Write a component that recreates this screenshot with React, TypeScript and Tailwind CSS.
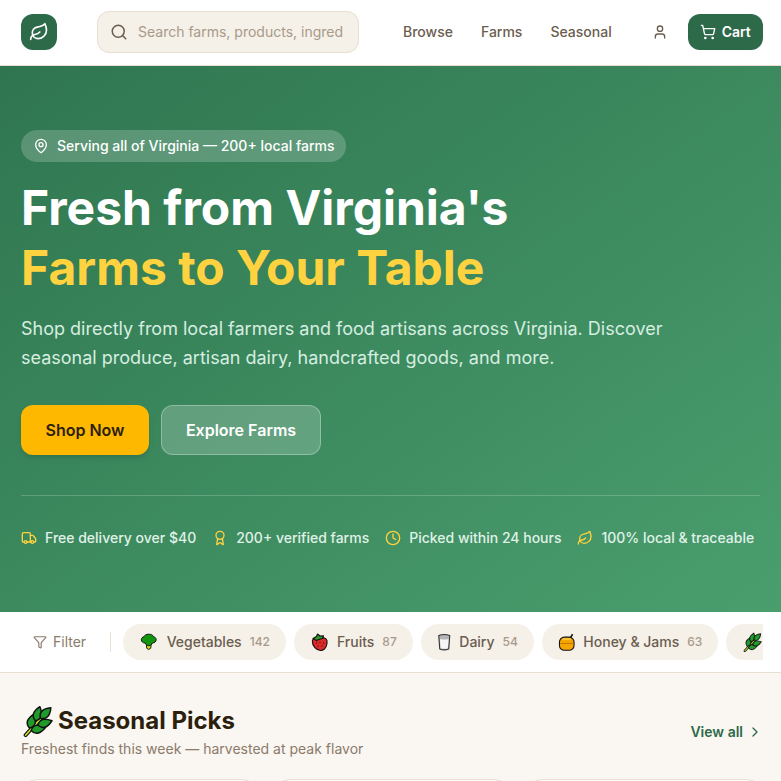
import { Award, ChevronRight, Clock, Filter, Leaf, MapPin, Search, ShoppingCart, Truck, User } from "lucide-react";

const perks = [
  { icon: Truck, label: "Free delivery over $40" },
  { icon: Award, label: "200+ verified farms" },
  { icon: Clock, label: "Picked within 24 hours" },
  { icon: Leaf, label: "100% local & traceable" },
];

function Broccoli() {
  return (
    <svg viewBox="0 0 20 20" className="h-5 w-[19.5px] shrink-0" stroke="#111" strokeWidth="1" strokeLinejoin="round">
      <path d="M7.500 12h5l-.500 4.500q-2 2.200-4 0z" fill="#d4e21e" />
      <path d="M10 2c2.700 0 4.300 1 4.900 2.600 1.500.3 2.700 1.400 2.700 3.100 0 2-1.800 3.300-3.800 3.300-.8 1.700-2.200 2.800-3.800 2.800s-3-1.100-3.800-2.800c-2 0-3.800-1.300-3.800-3.300 0-1.700 1.200-2.800 2.700-3.100C5.700 3 7.300 2 10 2z" fill="#12960f" />
    </svg>
  );
}

function Strawberry() {
  return (
    <svg viewBox="0 0 19 20" className="h-5 w-[19px] shrink-0" stroke="#111" strokeWidth="1.100" strokeLinejoin="round">
      <path d="M11 18.500c-4.500.3-8.800-4.800-8.700-9.500.2-3 4.500-4 7.200-3.500 2.500-.5 6.800.2 7.500 3.200.6 4-1.500 9.500-6 9.800z" fill="#dc2a2a" />
      <path d="M3 6.500l3.500-2 1-2.500 2.500 2 3.500-.2-1 2.700-3 .8-3 1.200z" fill="#2f9a2a" />
      <g fill="#5c0d0d" stroke="none">
        <circle cx="6.500" cy="11" r=".7" />
        <circle cx="10" cy="10.500" r=".7" />
        <circle cx="13.500" cy="11" r=".7" />
        <circle cx="8" cy="14" r=".7" />
        <circle cx="12" cy="14" r=".7" />
      </g>
    </svg>
  );
}

function Milk() {
  return (
    <svg viewBox="0 0 14 20" className="h-5 w-[14.5px] shrink-0" stroke="#333" strokeWidth="1.100" strokeLinejoin="round">
      <path d="M1.500 3.500Q7 1.500 12.500 3.500l-1 13.500q-4.500 1.800-9 0z" fill="#b5b5b5" />
      <path d="M2.700 7q4.300 1 8.600 0l-.7 9.300q-3.600 1.100-7.200 0z" fill="#f6f6f6" stroke="none" />
    </svg>
  );
}

function Honey() {
  return (
    <svg viewBox="0 0 18 20" className="h-5 w-[17.5px] shrink-0" stroke="#111" strokeWidth="1.100" strokeLinejoin="round">
      <path d="M12.500 6l2.500-4" fill="none" strokeWidth="1.600" />
      <rect x="1.500" y="5" width="15" height="13.500" rx="5" fill="#f5a500" />
      <path d="M2 11.500h14" stroke="#b36b00" strokeWidth=".8" />
      <path d="M5 7h8" stroke="#ffd75e" strokeWidth="1.200" />
    </svg>
  );
}

const leaflets = [
  "translate(8 12) rotate(-72)",
  "translate(13 18) rotate(-12)",
  "translate(12.500 6.500) rotate(-72)",
  "translate(18 13.500) rotate(-18)",
  "translate(18.500 6) rotate(-45)",
];

function Herb({ className }: { className: string }) {
  return (
    <svg viewBox="0 0 24 24" className={className} stroke="#111" strokeWidth="1.100" strokeLinejoin="round">
      <path d="M3.500 22.500L15 10" strokeWidth="3" strokeLinecap="round" />
      <path d="M3.500 22.500L15 10" stroke="#cfe02a" strokeWidth="1.300" strokeLinecap="round" />
      <g fill="#1f9a2b">
        {leaflets.map((t) => (
          <path key={t} transform={t} d="M-5.500 0Q-2 -6 5.500 0Q-2 6 -5.500 0z" />
        ))}
      </g>
    </svg>
  );
}

const categories = [
  { icon: <Broccoli />, name: "Vegetables", count: 142 },
  { icon: <Strawberry />, name: "Fruits", count: 87 },
  { icon: <Milk />, name: "Dairy", count: 54 },
  { icon: <Honey />, name: "Honey & Jams", count: 63 },
];

export default function App() {
  return (
    <div className="h-[781px] overflow-hidden bg-[#faf6f1] font-['Inter',sans-serif]">
      <header className="flex h-[66px] items-center border-b border-[#e8dfd3] bg-white pr-[18px] pb-px pl-[21px]">
        <div className="flex h-9 w-9 shrink-0 items-center justify-center rounded-xl bg-[#2d6a4a]">
          <Leaf size={20} className="text-white" />
        </div>
        <div className="ml-10 flex h-[42px] w-[262px] shrink-0 items-center gap-2.5 overflow-hidden rounded-xl border border-[#e8dfd3] bg-[#f5f0e8] px-3">
          <Search size={18} className="shrink-0 text-[#6b5d4f]" />
          <span className="whitespace-nowrap text-sm text-[#a89a8a]">Search farms, products, ingred</span>
        </div>
        <nav className="ml-11 flex gap-7 text-sm font-medium text-[#6b5d4f]">
          <span>Browse</span>
          <span>Farms</span>
          <span>Seasonal</span>
        </nav>
        <User size={16} className="ml-10 text-[#6b5d4f]" />
        <button className="ml-5 flex h-9 items-center gap-1.5 rounded-xl bg-[#2d6a4a] px-3 text-sm font-semibold text-white">
          <ShoppingCart size={16} />
          Cart
        </button>
      </header>

      <section className="h-[546px] bg-gradient-to-br from-[#2f7650] to-[#4a9e6e] px-[21px] pt-16">
        <div className="flex h-8 w-fit items-center gap-2 rounded-full bg-white/20 px-3 text-sm font-medium text-white">
          <MapPin size={16} />
          Serving all of Virginia — 200+ local farms
        </div>
        <h1 className="mt-4 text-5xl leading-[60px] font-bold text-white">
          Fresh from Virginia's
          <br />
          <span className="text-[#ffd23f]">Farms to Your Table</span>
        </h1>
        <p className="mt-4 w-[680px] text-lg leading-[29px] text-[#d6eee0]">
          Shop directly from local farmers and food artisans across Virginia. Discover seasonal produce, artisan dairy, handcrafted goods, and more.
        </p>
        <div className="mt-[33px] flex gap-3">
          <button className="h-[50px] w-32 rounded-xl bg-[#ffb800] text-base font-semibold text-[#2c1f0e] shadow-md">Shop Now</button>
          <button className="h-[50px] w-40 rounded-xl border border-white/30 bg-white/20 text-base font-semibold text-white">Explore Farms</button>
        </div>
        <div className="mt-10 flex gap-4 border-t border-white/20 pt-8">
          {perks.map((p) => (
            <div key={p.label} className="flex items-center gap-2 whitespace-nowrap text-sm font-medium text-[#e0f2e8]">
              <p.icon size={16} className="text-[#ffd23f]" />
              {p.label}
            </div>
          ))}
        </div>
      </section>

      <div className="flex h-[61px] items-center border-b border-[#e8dfd3] bg-white pr-[18px] pl-[33px]">
        <div className="flex items-center gap-1.5 pr-6 text-sm text-[#8a7b6b]">
          <Filter size={14} />
          Filter
        </div>
        <div className="h-5 w-px shrink-0 bg-[#e8dfd3]" />
        <div className="ml-3 flex gap-2 overflow-hidden">
          {categories.map((c) => (
            <div key={c.name} className="flex h-9 shrink-0 items-center gap-2 rounded-full bg-[#f5f0e8] px-4 text-sm font-medium text-[#6b5d4f]">
              {c.icon}
              {c.name}
              <span className="text-xs text-[#a89a8a]">{c.count}</span>
            </div>
          ))}
          <div className="flex h-9 w-14 shrink-0 items-center rounded-full bg-[#f5f0e8] px-4">
            <Herb className="h-5 w-5 shrink-0" />
          </div>
        </div>
      </div>

      <section className="pt-8 pr-[18px] pl-[21px]">
        <div className="flex items-center justify-between">
          <div>
            <h2 className="flex items-center gap-[5px] text-2xl font-bold text-[#2c1f0e]">
              <Herb className="h-8 w-8 shrink-0" />
              Seasonal Picks
            </h2>
            <p className="mt-0.5 text-sm text-[#8a7b6b]">Freshest finds this week — harvested at peak flavor</p>
          </div>
          <div className="flex items-center gap-1 text-sm font-semibold text-[#2d6a4a]">
            View all
            <ChevronRight size={16} />
          </div>
        </div>
        <div className="mt-5 grid grid-cols-3 gap-4">
          <div className="h-40 rounded-2xl border border-[#e8dfd3] bg-white" />
          <div className="h-40 rounded-2xl border border-[#e8dfd3] bg-white" />
          <div className="h-40 rounded-2xl border border-[#e8dfd3] bg-white" />
        </div>
      </section>
    </div>
  );
}
